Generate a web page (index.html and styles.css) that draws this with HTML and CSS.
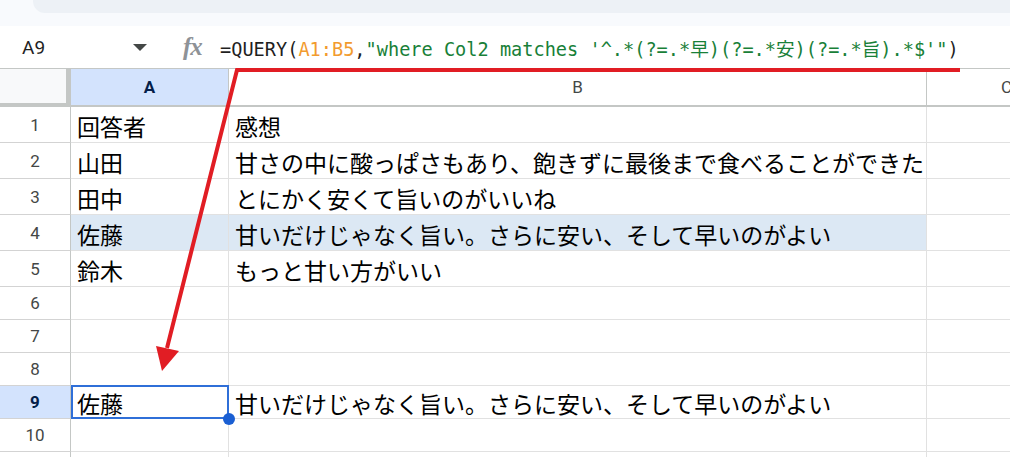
FILE: index.html
```html
<!DOCTYPE html>
<html lang="ja">
<head>
    <meta charset="UTF-8">
    <meta name="viewport" content="width=device-width, initial-scale=1.0">
    <title>QUERY matches</title>
    <link rel="stylesheet" href="styles.css">
</head>
<body>
    <!-- Bandeau du haut -->
    <div class="topbar"><div class="search-box"></div></div>

    <!-- Barre de formule -->
    <div class="formula-bar">
        <div class="name-box">A9</div>
        <svg class="dropdown" width="14" height="7" viewBox="0 0 14 7"><path d="M0 0h14L7 7z" fill="#444746"/></svg>
        <div class="fx">fx</div>
        <div class="formula">=QUERY(<span class="ref">A1:B5</span>,<span class="str">"where Col2 matches '^.*(?=.*早)(?=.*安)(?=.*旨).*$'"</span>)</div>
    </div>

    <!-- Grille -->
    <div class="sheet">
        <div class="corner"></div>
        <div class="col-head active">A</div>
        <div class="col-head">B</div>
        <div class="col-head">C</div>

        <div class="row-head">1</div><div class="cell">回答者</div><div class="cell">感想</div><div class="cell"></div>
        <div class="row-head">2</div><div class="cell">山田</div><div class="cell">甘さの中に酸っぱさもあり、飽きずに最後まで食べることができた</div><div class="cell"></div>
        <div class="row-head">3</div><div class="cell">田中</div><div class="cell">とにかく安くて旨いのがいいね</div><div class="cell"></div>
        <div class="row-head">4</div><div class="cell match">佐藤</div><div class="cell match">甘いだけじゃなく旨い。さらに安い、そして早いのがよい</div><div class="cell"></div>
        <div class="row-head">5</div><div class="cell">鈴木</div><div class="cell">もっと甘い方がいい</div><div class="cell"></div>
        <div class="row-head">6</div><div class="cell"></div><div class="cell"></div><div class="cell"></div>
        <div class="row-head">7</div><div class="cell"></div><div class="cell"></div><div class="cell"></div>
        <div class="row-head">8</div><div class="cell"></div><div class="cell"></div><div class="cell"></div>
        <div class="row-head active">9</div><div class="cell selected">佐藤<span class="handle"></span></div><div class="cell">甘いだけじゃなく旨い。さらに安い、そして早いのがよい</div><div class="cell"></div>
        <div class="row-head">10</div><div class="cell"></div><div class="cell"></div><div class="cell"></div>
        <div class="row-head"></div><div class="cell"></div><div class="cell"></div><div class="cell"></div>
    </div>

    <!-- Flèche d'annotation -->
    <svg class="annotation" width="1010" height="457" viewBox="0 0 1010 457">
        <polyline points="960,70 237,70 167,348" fill="none" stroke="#e11d24" stroke-width="4"/>
        <polygon points="156,346 179,351 162,371" fill="#e11d24"/>
    </svg>
</body>
</html>
```

FILE: styles.css
```css
body {
    margin: 0;
    width: 1010px;
    height: 457px;
    overflow: hidden;
    position: relative;
    background-color: #fff;
    font-family: Roboto, "Noto Sans CJK JP", sans-serif;
}

.topbar {
    height: 26px;
    background-color: #f8fafd;
}

.search-box {
    margin-left: 33px;
    height: 13px;
    background-color: #edf1f6;
    border-bottom-left-radius: 12px;
}

.formula-bar {
    height: 42px;
    display: flex;
    align-items: center;
    border-bottom: 1px solid #c4c7c5;
}

.name-box {
    width: 133px;
    box-sizing: border-box;
    padding-left: 22px;
    font-size: 19px;
    color: #1f1f1f;
}

.dropdown {
    display: block;
}

.fx {
    margin-left: 36px;
    width: 37px;
    font-family: "Liberation Serif", serif;
    font-style: italic;
    font-weight: bold;
    font-size: 25px;
    color: #8e9297;
    letter-spacing: -1px;
}

.formula {
    font-family: "DejaVu Sans Mono", "Noto Sans CJK JP", monospace;
    font-size: 18.6px;
    color: #1f1f1f;
    white-space: nowrap;
}

.formula .ref {
    color: #f29b2e;
}

.formula .str {
    color: #188038;
}

.sheet {
    width: 1010px;
    height: 388px;
    overflow: hidden;
    display: grid;
    grid-template-columns: 71px 158px 698px 160px;
    grid-template-rows: 38px repeat(5, 36px) repeat(5, 33px) 33px;
}

.sheet > div {
    box-sizing: border-box;
    border-right: 1px solid #e1e1e1;
    border-bottom: 1px solid #e1e1e1;
}

.corner {
    background-color: #f8f9fa;
    border-right: 5px solid #c4c7c5 !important;
    border-bottom: 4px solid #c4c7c5 !important;
}

.col-head {
    display: flex;
    align-items: center;
    justify-content: center;
    font-size: 17px;
    color: #444746;
    border-right-color: #c4c7c5 !important;
    border-bottom: 2px solid #c4c7c5 !important;
}

.row-head {
    display: flex;
    align-items: center;
    justify-content: center;
    font-size: 17px;
    color: #444746;
    border-right-color: #c4c7c5 !important;
    border-bottom-color: #d3d3d3 !important;
}

.col-head.active,
.row-head.active {
    background-color: #d3e3fd;
    color: #041e49;
    font-weight: bold;
}

.cell {
    position: relative;
    display: flex;
    align-items: center;
    padding: 2px 6px 0;
    font-family: "Noto Sans CJK JP", sans-serif;
    font-size: 23px;
    color: #000;
    white-space: nowrap;
}

.cell.match {
    background-color: #dce8f4;
}

.cell.selected::after {
    content: "";
    position: absolute;
    left: 0;
    top: -1px;
    right: -1px;
    bottom: -1px;
    border: 2px solid #2f6fd8;
}

.handle {
    position: absolute;
    right: -7px;
    bottom: -7px;
    width: 12px;
    height: 12px;
    border-radius: 50%;
    background-color: #1a5fd3;
    z-index: 1;
}

.annotation {
    position: absolute;
    left: 0;
    top: 0;
    pointer-events: none;
}
```
